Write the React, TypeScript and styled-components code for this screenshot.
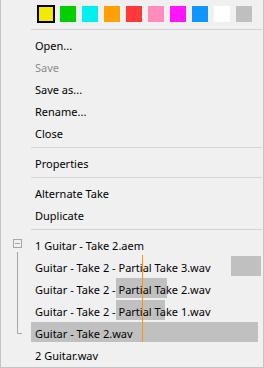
import React from "react";
import styled, { createGlobalStyle } from "styled-components";

const Global = createGlobalStyle`
  html, body { margin: 0; padding: 0; background: #f0f0f0; }
  #root { width: 264px; height: 368px; }
`;

const Menu = styled.div`
  box-sizing: border-box;
  width: 264px;
  height: 368px;
  background: #f0f0f0;
  border-left: 1px solid #c4c4c4;
  border-right: 1px solid #c4c4c4;
  border-bottom: 1px solid #c4c4c4;
  font-family: "Noto Sans", "Open Sans", sans-serif;
  font-size: 11px;
  color: #000;
  display: flex;
  flex-direction: column;
  overflow: hidden;
`;

const SwatchRow = styled.div`
  display: flex;
  gap: 6px;
  padding: 6px 0 0 37px;
`;

const Swatch = styled.div<{ $color: string; $selected?: boolean }>`
  box-sizing: border-box;
  width: ${(p) => (p.$selected ? 18 : 16)}px;
  height: ${(p) => (p.$selected ? 18 : 16)}px;
  margin: ${(p) => (p.$selected ? "-1px" : "0")};
  background: ${(p) => p.$color};
  border: ${(p) => (p.$selected ? "2px solid #000" : "none")};
`;

const TopSeparator = styled.div`
  height: 1px;
  background: #d4d4d4;
  margin: 7px 1px 4px 30px;
`;

const Separator = styled.div`
  height: 1px;
  background: #d4d4d4;
  margin: 3px 1px 4px 30px;
`;

const Item = styled.div<{ $disabled?: boolean }>`
  height: 22px;
  display: flex;
  align-items: center;
  padding-left: 34px;
  color: ${(p) => (p.$disabled ? "#8d8d8d" : "#000")};
  white-space: nowrap;
`;

const Tree = styled.div`
  position: relative;
  display: flex;
`;

const Gutter = styled.svg`
  flex: 0 0 30px;
  width: 30px;
  height: 132px;
  display: block;
`;

const Rows = styled.div`
  flex: 1;
  display: flex;
  flex-direction: column;
`;

const TreeRow = styled.div`
  position: relative;
  height: 22px;
  display: flex;
  align-items: center;
  padding-left: 4px;
  white-space: nowrap;
`;

const Bar = styled.div`
  position: absolute;
  top: 0;
  height: 20px;
  background: #c0c0c0;
`;

const RowText = styled.span`
  position: relative;
`;

const Playhead = styled.div`
  position: absolute;
  left: 141px;
  top: 21px;
  width: 1px;
  height: 87px;
  background: #ff9500;
`;

const swatches = [
  "#f3ea00",
  "#00d000",
  "#00f0f0",
  "#ffa000",
  "#ff3838",
  "#ff8cbc",
  "#ff14ff",
  "#0f96ff",
  "#ffffff",
  "#bfbfbf",
];

type Row = { label: string; bar?: { left: number; width: number } };

const rows: Row[] = [
  { label: "1 Guitar - Take 2.aem" },
  { label: "Guitar - Take 2 - Partial Take 3.wav", bar: { left: 200, width: 30 } },
  { label: "Guitar - Take 2 - Partial Take 2.wav", bar: { left: 85, width: 51 } },
  { label: "Guitar - Take 2 - Partial Take 1.wav", bar: { left: 85, width: 49 } },
  { label: "Guitar - Take 2.wav", bar: { left: 0, width: 227 } },
  { label: "2 Guitar.wav" },
];

export default function App() {
  return (
    <>
      <Global />
      <Menu>
        <SwatchRow>
          {swatches.map((c, i) => (
            <Swatch key={c} $color={c} $selected={i === 0} />
          ))}
        </SwatchRow>
        <TopSeparator />
        <Item>Open...</Item>
        <Item $disabled>Save</Item>
        <Item>Save as...</Item>
        <Item>Rename...</Item>
        <Item>Close</Item>
        <Separator />
        <Item>Properties</Item>
        <Separator />
        <Item>Alternate Take</Item>
        <Item>Duplicate</Item>
        <Separator />
        <Tree>
          <Gutter viewBox="0 0 30 132">
            <rect x="12.5" y="5.5" width="8" height="8" fill="none" stroke="#a6a6a6" />
            <line x1="14" y1="9.5" x2="19" y2="9.5" stroke="#a6a6a6" />
            <path d="M16.5 18 V99.5 H21" fill="none" stroke="#a6a6a6" />
          </Gutter>
          <Rows>
            {rows.map((r) => (
              <TreeRow key={r.label}>
                {r.bar && <Bar style={{ left: r.bar.left, width: r.bar.width }} />}
                <RowText>{r.label}</RowText>
              </TreeRow>
            ))}
          </Rows>
          <Playhead />
        </Tree>
      </Menu>
    </>
  );
}
